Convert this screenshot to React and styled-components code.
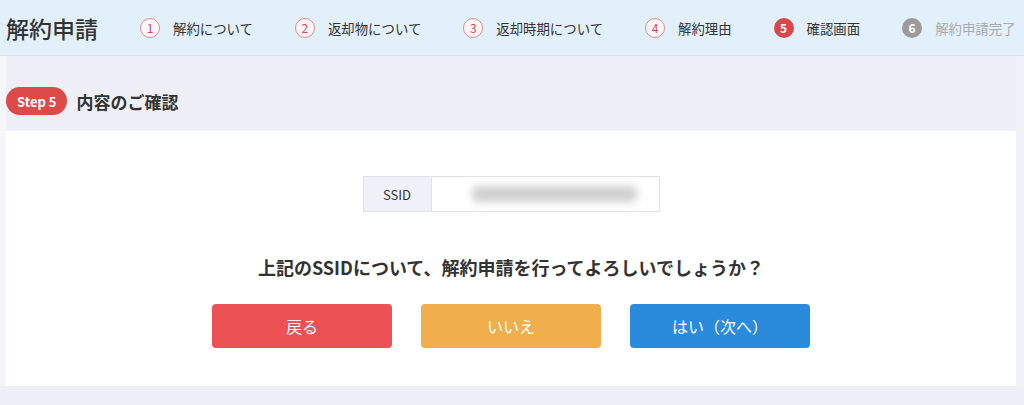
import React from 'react';
import styled, { createGlobalStyle } from 'styled-components';

const GlobalStyle = createGlobalStyle`
    html, body {
        margin: 0;
        padding: 0;
        background: #eeeff7;
        font-family: "Noto Sans CJK JP", "Noto Sans", sans-serif;
        color: #333;
    }
`;

const Header = styled.header`
    height: 55px;
    background: #e2f0fb;
    border-bottom: 1px solid #d6e4ef;
    display: flex;
    align-items: center;
    padding-left: 6px;
`;

const PageTitle = styled.h1`
    margin: 0 42px 0 0;
    font-size: 23px;
    font-weight: 500;
    color: #333;
`;

const Steps = styled.ol`
    display: flex;
    align-items: center;
    gap: 42px;
    margin: 0;
    padding: 0;
    list-style: none;
`;

const StepItem = styled.li`
    display: flex;
    align-items: center;
    gap: 13px;
    font-size: 13.4px;
    color: ${(p) => (p.$state === 'todo' ? '#aaa' : '#333')};
    white-space: nowrap;
`;

const Num = styled.span`
    width: 20px;
    height: 20px;
    box-sizing: border-box;
    border-radius: 50%;
    display: flex;
    align-items: center;
    justify-content: center;
    font-size: 12px;
    font-weight: ${(p) => (p.$state === 'done' ? 400 : 700)};
    border: ${(p) => (p.$state === 'done' ? '1.5px solid #e3888a' : 'none')};
    color: ${(p) => (p.$state === 'done' ? '#d9484c' : '#fff')};
    background: ${(p) =>
        p.$state === 'current' ? '#d9474a' : p.$state === 'todo' ? '#9b9b9b' : '#fdf6f8'};
`;

const Main = styled.main`
    border-left: 6px solid #f6f6fa;
    border-right: 8px solid #f1f1f8;
`;

const SectionHead = styled.div`
    height: 75px;
    display: flex;
    align-items: center;
    gap: 9px;
`;

const Badge = styled.span`
    height: 28px;
    padding: 0 11px;
    border-radius: 14px;
    background: #dc4b49;
    color: #fff;
    font-size: 13px;
    font-weight: 700;
    display: flex;
    align-items: center;
    margin-top: 15px;
`;

const SectionTitle = styled.h2`
    margin: 15px 0 0;
    font-size: 17px;
    font-weight: 700;
    color: #333;
`;

const Card = styled.section`
    background: #fff;
    height: 255px;
    display: flex;
    flex-direction: column;
    align-items: center;
    padding-top: 45px;
    box-sizing: border-box;
`;

const InfoTable = styled.div`
    display: flex;
    width: 297px;
    height: 36px;
    border: 1px solid #e2e2e8;
    box-sizing: border-box;
`;

const InfoLabel = styled.div`
    width: 67px;
    background: #f0f1f8;
    border-right: 1px solid #e2e2e8;
    display: flex;
    align-items: center;
    justify-content: center;
    font-size: 13px;
    color: #333;
`;

const InfoValue = styled.div`
    flex: 1;
    display: flex;
    align-items: center;
    padding-left: 40px;
`;

const Blur = styled.div`
    width: 165px;
    height: 16px;
    background: #cfcfcf;
    border-radius: 6px;
    filter: blur(4px);
`;

const Question = styled.p`
    margin: 42px 0 0;
    font-size: 18px;
    line-height: 27px;
    font-weight: 700;
    color: #333;
`;

const Buttons = styled.div`
    display: flex;
    gap: 29px;
    margin-top: 23px;
`;

const colors = { red: '#ec5156', orange: '#f0ae4c', blue: '#2a8adb' };

const Button = styled.button`
    width: 180px;
    height: 44px;
    border: none;
    border-radius: 4px;
    background: ${(p) => colors[p.$color]};
    color: #fff;
    font-family: inherit;
    font-size: 16px;
    cursor: pointer;
`;

const steps = [
    { n: '1', label: '解約について', state: 'done' },
    { n: '2', label: '返却物について', state: 'done' },
    { n: '3', label: '返却時期について', state: 'done' },
    { n: '4', label: '解約理由', state: 'done' },
    { n: '5', label: '確認画面', state: 'current' },
    { n: '6', label: '解約申請完了', state: 'todo' },
];

const App = () => (
    <>
        <GlobalStyle />
        <Header>
            <PageTitle>解約申請</PageTitle>
            <Steps>
                {steps.map((s) => (
                    <StepItem key={s.n} $state={s.state}>
                        <Num $state={s.state}>{s.n}</Num>
                        {s.label}
                    </StepItem>
                ))}
            </Steps>
        </Header>
        <Main>
            <SectionHead>
                <Badge>Step 5</Badge>
                <SectionTitle>内容のご確認</SectionTitle>
            </SectionHead>
            <Card>
                <InfoTable>
                    <InfoLabel>SSID</InfoLabel>
                    <InfoValue>
                        <Blur />
                    </InfoValue>
                </InfoTable>
                <Question>上記のSSIDについて、解約申請を行ってよろしいでしょうか？</Question>
                <Buttons>
                    <Button $color="red">戻る</Button>
                    <Button $color="orange">いいえ</Button>
                    <Button $color="blue">はい（次へ）</Button>
                </Buttons>
            </Card>
        </Main>
    </>
);

export default App;
